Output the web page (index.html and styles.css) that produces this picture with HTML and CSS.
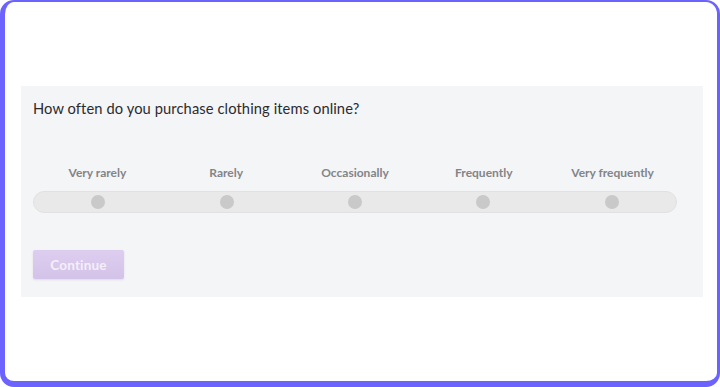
FILE: index.html
```html
<!DOCTYPE html>
<html lang="en">

<head>
    <meta charset="UTF-8" />
    <meta name="viewport" content="width=device-width, initial-scale=1.0" />
    <title>Survey question</title>
    <link rel="stylesheet" href="styles.css">
</head>

<body>
    <div class="frame">
        <section class="question">
            <h1>How often do you purchase clothing items online?</h1>

            <div class="scale">
                <div class="labels">
                    <span>Very rarely</span>
                    <span>Rarely</span>
                    <span>Occasionally</span>
                    <span>Frequently</span>
                    <span>Very frequently</span>
                </div>
                <div class="track">
                    <span class="dot"></span>
                    <span class="dot"></span>
                    <span class="dot"></span>
                    <span class="dot"></span>
                    <span class="dot"></span>
                </div>
            </div>

            <button class="continue" disabled>Continue</button>
        </section>
    </div>
</body>

</html>
```

FILE: styles.css
```css
:root {
    --accent: #6c63ff;
    --panel: #f4f5f7;
    --track: #e9e9ea;
    --dot: #c9c9c9;
    --label: #838487;
    --text: #2b2b2e;
}

/* Base */
html,
body {
    margin: 0;
    padding: 0;
    background: #ffffff;
}

body {
    font-family: "Lato", "Open Sans", sans-serif;
    color: var(--text);
}

.frame {
    box-sizing: border-box;
    width: 720px;
    height: 387px;
    border-style: solid;
    border-color: var(--accent);
    border-width: 2px 3px 6px 5px;
    border-radius: 14px;
    overflow: hidden;
}

.question {
    box-sizing: border-box;
    height: 211px;
    margin: 84px 14px 0 16px;
    padding: 11px 26px 0 12px;
    background: var(--panel);
}

.question h1 {
    margin: 0;
    font-size: 14.7px;
    font-weight: 400;
    line-height: 22px;
    letter-spacing: 0.1px;
}

/* Scale */
.scale {
    margin-top: 47px;
}

.labels,
.track {
    display: grid;
    grid-template-columns: repeat(5, 1fr);
    justify-items: center;
    align-items: center;
}

.labels span {
    font-size: 12px;
    font-weight: 700;
    line-height: 14px;
    color: var(--label);
}

.track {
    box-sizing: border-box;
    height: 22px;
    margin-top: 11px;
    border: 1px solid #e1e1e3;
    border-radius: 11px;
    background: var(--track);
}

.track .dot {
    width: 14px;
    height: 14px;
    border-radius: 50%;
    background: var(--dot);
}

/* Button */
.continue {
    display: block;
    width: 91px;
    height: 29px;
    margin-top: 37px;
    padding: 0;
    border: none;
    border-radius: 2px;
    background: linear-gradient(#ddcdef, #d3c3e8);
    box-shadow: 0 1px 2px rgba(120, 100, 160, 0.18);
    color: #f4effa;
    font-family: "Lato", "Open Sans", sans-serif;
    font-size: 13.5px;
    font-weight: 700;
    letter-spacing: 0.2px;
}
```
